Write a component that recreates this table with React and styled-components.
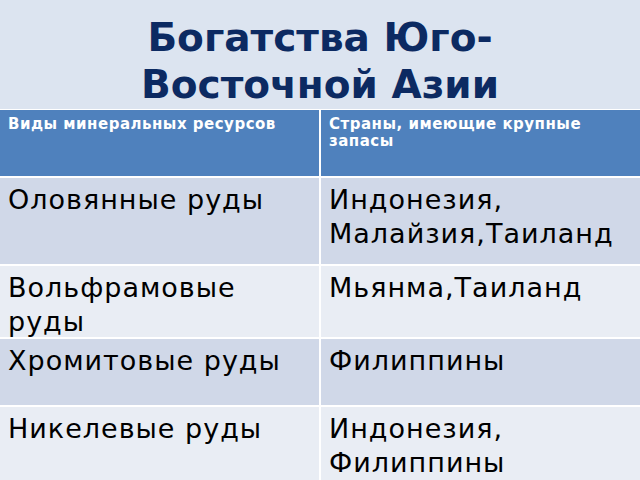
import { Fragment } from "react";
import styled, { createGlobalStyle } from "styled-components";

const GlobalStyle = createGlobalStyle`
  html, body {
    margin: 0;
    padding: 0;
    background-color: #dce4f0;
  }
  body {
    width: 640px;
    height: 480px;
    overflow: hidden;
    font-family: "DejaVu Sans", Verdana, sans-serif;
  }
`;

const Slide = styled.div`
  width: 640px;
  height: 480px;
  display: flex;
  flex-direction: column;
  background-color: #dce4f0;
`;

const Title = styled.h1`
  margin: 0;
  flex-shrink: 0;
  height: 109px;
  box-sizing: border-box;
  padding-top: 14px;
  text-align: center;
  font-family: "DejaVu Sans", sans-serif;
  font-weight: bold;
  font-size: 39px;
  line-height: 47px;
  color: #0c2a62;
`;

const Table = styled.div`
  flex-shrink: 0;
  display: grid;
  grid-template-columns: 319px 1fr;
  grid-template-rows: 66px 86px 71px 66px 80px;
  gap: 2px;
  background-color: #ffffff;
  padding-top: 1px;
`;

const HeadCell = styled.div`
  background-color: #4f81bd;
  color: #ffffff;
  font-weight: bold;
  font-size: 15px;
  letter-spacing: 0.5px;
  line-height: 17px;
  padding: 6px 8px;
`;

const Cell = styled.div`
  background-color: ${(p) => (p.$dark ? "#d0d8e8" : "#e9edf4")};
  color: #000000;
  font-size: 27px;
  letter-spacing: 1px;
  line-height: 34px;
  padding: 5px 8px;
`;

const rows = [
  ["Оловянные руды", "Индонезия, Малайзия,Таиланд"],
  ["Вольфрамовые руды", "Мьянма,Таиланд"],
  ["Хромитовые руды", "Филиппины"],
  ["Никелевые руды", "Индонезия, Филиппины"],
];

export default function App() {
  return (
    <>
      <GlobalStyle />
      <Slide>
        <Title>
          Богатства Юго-
          <br />
          Восточной Азии
        </Title>
        <Table>
          <HeadCell>Виды минеральных ресурсов</HeadCell>
          <HeadCell>Страны, имеющие крупные запасы</HeadCell>
          {rows.map(([kind, countries], i) => (
            <Fragment key={kind}>
              <Cell $dark={i % 2 === 0}>{kind}</Cell>
              <Cell $dark={i % 2 === 0}>{countries}</Cell>
            </Fragment>
          ))}
        </Table>
      </Slide>
    </>
  );
}
